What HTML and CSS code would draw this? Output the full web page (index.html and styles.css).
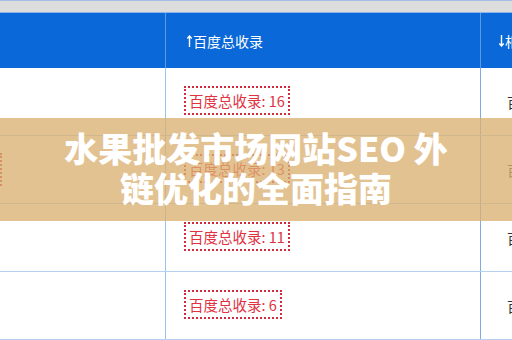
FILE: index.html
```html
<!DOCTYPE html>
<html lang="zh">
<head>
<meta charset="utf-8">
<link rel="stylesheet" href="styles.css">
</head>
<body>
<div class="page">
  <div class="topbar"></div>
  <div class="thead">
    <div class="cell c1"></div>
    <div class="cell c2"><svg class="arrow" width="5" height="12" viewBox="0 0 5 12"><path d="M2.5 1V12M0.3 3.6L2.5 1L4.7 3.6" fill="none" stroke="#fff" stroke-width="1.4"/></svg>百度总收录</div>
    <div class="cell c3"><svg class="arrow" width="5" height="12" viewBox="0 0 5 12"><path d="M2.5 0V11M0.3 8.4L2.5 11L4.7 8.4" fill="none" stroke="#fff" stroke-width="1.4"/></svg>相关</div>
  </div>
  <div class="row">
    <div class="cell c1"></div>
    <div class="cell c2"><span class="tag">百度总收录: 16</span></div>
    <div class="cell c3"><span class="dark">百度</span></div>
  </div>
  <div class="row">
    <div class="cell c1"><span class="edge"></span></div>
    <div class="cell c2"><span class="tag">百度总收录: 13</span></div>
    <div class="cell c3"><span class="dark">百度</span></div>
  </div>
  <div class="row">
    <div class="cell c1"></div>
    <div class="cell c2"><span class="tag">百度总收录: 11</span></div>
    <div class="cell c3"><span class="dark">百度</span></div>
  </div>
  <div class="row">
    <div class="cell c1"></div>
    <div class="cell c2"><span class="tag">百度总收录: 6</span></div>
    <div class="cell c3"><span class="dark">百度</span></div>
  </div>
  <div class="banner">
    <h1 class="title">水果批发市场网站SEO 外<br>链优化的全面指南</h1>
  </div>
</div>
</body>
</html>
```

FILE: styles.css
```css
* { box-sizing: border-box; }
html, body {
  margin: 0;
  padding: 0;
  background: #ffffff;
  overflow: hidden;
}
.page {
  position: relative;
  width: 512px;
  height: 340px;
  overflow: hidden;
  font-family: "Noto Sans CJK SC", "Noto Sans", sans-serif;
}
.topbar {
  height: 13px;
  background: #dddddd;
  border-top: 1px solid #a3bfe6;
  border-bottom: 1px solid #8db5ec;
}
.thead {
  display: flex;
  height: 55px;
  background: #0a68d9;
  color: #ffffff;
  font-size: 14px;
}
.row {
  display: flex;
  height: 68px;
  border-bottom: 1px solid #b4d2ef;
}
.cell {
  display: flex;
  align-items: center;
  white-space: nowrap;
  overflow: hidden;
}
.c1 { width: 166px; flex: none; border-right: 1px solid #9cc3ee; }
.c2 { width: 315px; flex: none; padding-left: 18px; border-right: 1px solid #80aae6; }
.c3 { flex: 1; padding-left: 26px; }
.thead .c1 { border-right-color: #5d9ae6; }
.thead .c2 { padding-left: 21px; border-right-color: #5d9ae6; }
.thead .c3 { padding-left: 18px; }
.arrow { margin-right: 1px; flex: none; }
.row .c2 { padding-bottom: 3px; }
.tag {
  display: inline-block;
  border: 2px dotted #d12a3c;
  color: #e0323f;
  font-size: 14.5px;
  line-height: 21px;
  padding: 2px 3px 2px 3px;
}
.dark {
  color: #333333;
  font-size: 14px;
}
.edge {
  display: block;
  width: 2px;
  height: 33px;
  border-left: 2px dotted #d0303c;
}
.banner {
  position: absolute;
  left: 0;
  right: 0;
  top: 118px;
  height: 103px;
  background: rgba(218, 175, 112, 0.76);
  display: flex;
  align-items: center;
  justify-content: center;
}
.title {
  margin: 0;
  color: #ffffff;
  font-size: 34px;
  font-weight: 900;
  line-height: 40px;
  text-align: center;
  padding-bottom: 4px;
  white-space: nowrap;
}
```
